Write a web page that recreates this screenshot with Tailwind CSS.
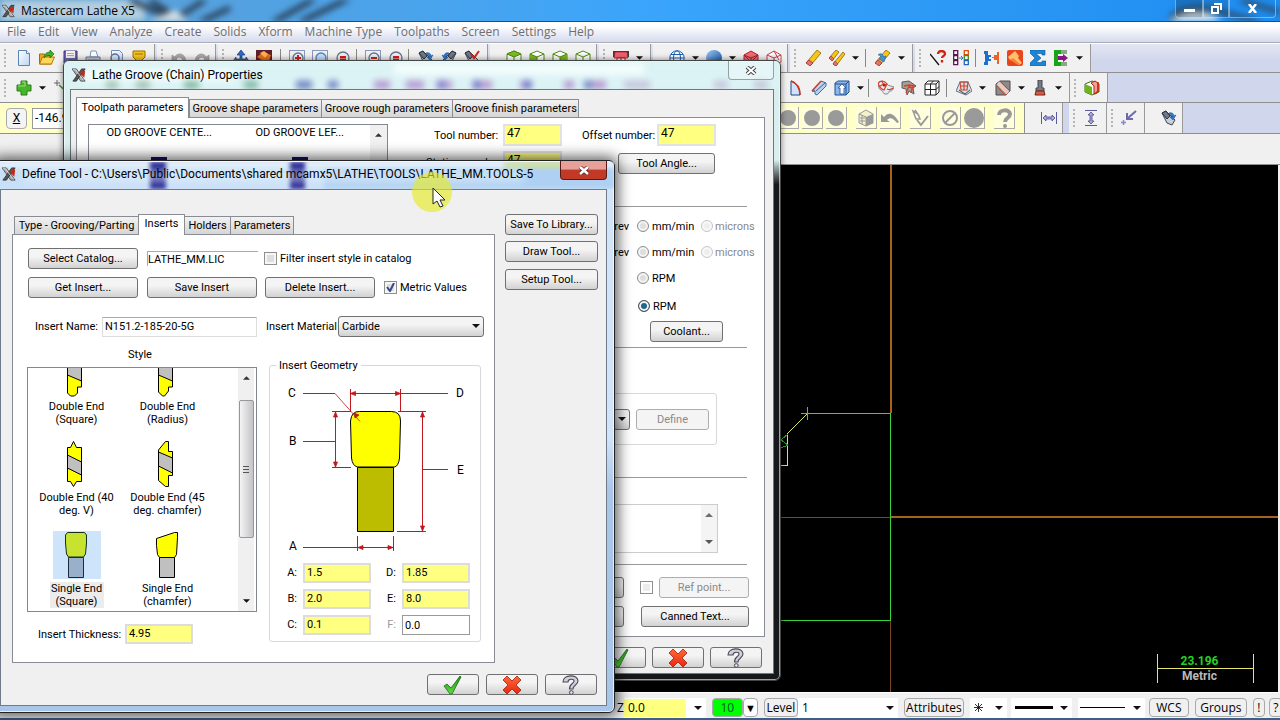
<!DOCTYPE html>
<html lang="en">
<head>
<meta charset="utf-8">
<meta name="viewport" content="width=device-width, initial-scale=1">
<title>Mastercam Lathe X5</title>
<script src="https://cdn.jsdelivr.net/npm/@tailwindcss/browser@4"></script>
</head>
<body class="h-screen overflow-hidden bg-[#f0f0f0] text-[11px] leading-[13px] text-black font-[Roboto,'Liberation_Sans',sans-serif]">

<svg class="absolute size-0" aria-hidden="true">
  <linearGradient id="gBlue" x1="0" y1="0" x2="1" y2="1"><stop offset="0" stop-color="#9cc8f5"/><stop offset="1" stop-color="#0b4a9c"/></linearGradient>
  <linearGradient id="gPage" x1="0" y1="0" x2="1" y2="1"><stop offset="0" stop-color="#fff"/><stop offset="1" stop-color="#b9d5f5"/></linearGradient>
  <linearGradient id="gRed" x1="0" y1="0" x2="0" y2="1"><stop offset="0" stop-color="#ff6a3c"/><stop offset="1" stop-color="#e8260c"/></linearGradient>
  <linearGradient id="gGreen" x1="0" y1="0" x2="0" y2="1"><stop offset="0" stop-color="#1f8a1f"/><stop offset="1" stop-color="#5ee03c"/></linearGradient>
  <symbol id="app" viewBox="0 0 16 16"><path d="M0 1h5l10 14h-5z" fill="#aaa" stroke="#333" stroke-width=".8"/><path d="M15 1h-4L1 15h4z" fill="#555" stroke="#222" stroke-width=".8"/><path d="M10 3h5l-1 8-4-4z" fill="#c22b1c"/><path d="M1 2h3l9 12" stroke="#ddd" fill="none"/></symbol>
  <symbol id="new" viewBox="0 0 16 16"><path d="M2.500 .5h8l3 3v12h-11z" fill="url(#gPage)" stroke="#5b83b5"/><path d="M10.500.5v3h3" fill="#fff" stroke="#5b83b5"/></symbol>
  <symbol id="open" viewBox="0 0 16 16"><path d="M.5 14V4h5l1 1.500h6V14z" fill="#e9a820" stroke="#a56a0a"/><path d="M.5 14l3-7h12l-3 7z" fill="#ffd65a" stroke="#b5780e"/><path d="M5 8c0-4 3-6 6-6V0l4 4-4 4V5.500C8 5.500 6.500 6 5 8z" fill="#3fb32b" stroke="#1d6b14" stroke-width=".7"/></symbol>
  <symbol id="save" viewBox="0 0 16 16"><path d="M2 1h13v14H4l-2-2z" fill="#6c66b8" stroke="#39337f"/><path d="M4 1h9v7H4z" fill="#f4f2ea"/><path d="M5 3.500h7M5 5.500h7" stroke="#b5a98a"/><path d="M5 10h7v5H5z" fill="#d5d5e6"/></symbol>
  <symbol id="print" viewBox="0 0 16 16"><path d="M5 7l1-6h5l2 6z" fill="#fff" stroke="#7796c2"/><path d="M1 7h14v6H1z" fill="#c3cbdc" stroke="#6a7894"/><path d="M3 10h10v5H3z" fill="#e9eef8" stroke="#8190ad"/></symbol>
  <symbol id="prev" viewBox="0 0 16 16"><path d="M3.500.5h8l3 3v12h-11z" fill="url(#gPage)" stroke="#6b8cba"/><circle cx="7" cy="8" r="4" fill="#cfe6fb" stroke="#5d6f8f" stroke-width="1.500"/><path d="M4 11l-3 4" stroke="#5d6f8f" stroke-width="2"/></symbol>
  <symbol id="shield" viewBox="0 0 16 16"><path d="M2 1h12v6l-4 4v4H6v-4L2 7z" fill="#f7c51a" stroke="#9a6a00"/><path d="M4 4h8" stroke="#a06c00"/></symbol>
  <symbol id="undo" viewBox="0 0 16 16"><path d="M1 5v6h6l-2-2c3-3 6-2 7 2v4h3C16 4 8 1 3.500 7z" fill="#a8a8a8" stroke="#8b8b8b" stroke-width=".6"/></symbol>
  <symbol id="tree" viewBox="0 0 16 16"><path d="M8 0l4 5h-3v4h4V7l3 4-3 4H3L0 11l3-4v2h4V5H4z" fill="#2f6bc4" stroke="#123a80" stroke-width=".7"/></symbol>
  <symbol id="paint" viewBox="0 0 16 16"><rect width="16" height="16" fill="#5b1f2d"/><path d="M1 7l6-5 8 3-3 9z" fill="#e9701c"/><path d="M4 3l4-2 4 3-3 4z" fill="#ffb04a"/></symbol>
  <symbol id="zin" viewBox="0 0 16 16"><rect x=".5" y=".5" width="15" height="13" fill="none" stroke="#223a8c" stroke-dasharray="1 1"/><circle cx="9" cy="8" r="5" fill="#e4f0fb" stroke="#6a7386" stroke-width="1.300"/><path d="M6 8h6M9 5v6" stroke="#e01b12" stroke-width="2"/><path d="M5 12l-4 4" stroke="#a98532" stroke-width="2"/></symbol>
  <symbol id="zwin" viewBox="0 0 16 16"><rect x=".5" y=".5" width="15" height="13" fill="none" stroke="#223a8c" stroke-dasharray="1 1"/><circle cx="9" cy="8" r="5" fill="#bfe0fb" stroke="#5b80b5" stroke-width="1.300"/><path d="M5 12l-4 4" stroke="#a98532" stroke-width="2"/></symbol>
  <symbol id="zwo" viewBox="0 0 16 16"><rect x=".5" y=".5" width="15" height="13" fill="none" stroke="#223a8c" stroke-dasharray="1 1"/><circle cx="9" cy="8" r="5" fill="#e4f0fb" stroke="#6a7386" stroke-width="1.300"/><path d="M6 8h6" stroke="#e01b12" stroke-width="2"/><path d="M5 12l-4 4" stroke="#a98532" stroke-width="2"/></symbol>
  <symbol id="zout" viewBox="0 0 16 16"><circle cx="8" cy="8" r="6" fill="#e4f0fb" stroke="#6a7386" stroke-width="1.300"/><path d="M5 7h6M5 9.500h6" stroke="#e01b12" stroke-width="1.800"/><path d="M4 12l-4 4" stroke="#a98532" stroke-width="2"/></symbol>
  <symbol id="spy" viewBox="0 0 16 16"><path d="M1 3l4-2 9 9-3 5-5-2z" fill="#c8ced8" stroke="#3d4654"/><path d="M1 3l5 6 3-3-4-5z" fill="#6d7888" stroke="#2b3340"/><path d="M8 3c3-1 5 1 5 3l2-1-3 5-3-3h2c0-2-2-3-3-4z" fill="#2879d4" stroke="#124682" stroke-width=".5"/></symbol>
  <symbol id="spyr" viewBox="0 0 16 16"><path d="M1 3l4-2 9 9-3 5-5-2z" fill="#c8ced8" stroke="#3d4654"/><path d="M1 3l5 6 3-3-4-5z" fill="#6d7888" stroke="#2b3340"/><path d="M7 4l3 4 5-7" fill="none" stroke="#d2261a" stroke-width="2"/></symbol>
  <symbol id="cubet" viewBox="0 0 16 16"><path d="M1 4l7-3 7 3v8l-7 3-7-3z" fill="#fff" stroke="#4d8a10"/><path d="M1 4l7-3 7 3-7 3z" fill="#7bbb20" stroke="#4d8a10"/><path d="M8 7v8" stroke="#4d8a10"/></symbol>
  <symbol id="cubef" viewBox="0 0 16 16"><path d="M1 4l7-3 7 3v8l-7 3-7-3z" fill="#fff" stroke="#4d8a10"/><path d="M1 4l7 3v8l-7-3z" fill="#7bbb20"/><path d="M1 4l7 3 7-3M8 7v8" fill="none" stroke="#4d8a10"/></symbol>
  <symbol id="cubes" viewBox="0 0 16 16"><path d="M1 4l7-3 7 3v8l-7 3-7-3z" fill="#fff" stroke="#4d8a10"/><path d="M15 4l-7 3v8l7-3z" fill="#7bbb20"/><path d="M1 4l7 3 7-3M8 7v8" fill="none" stroke="#4d8a10"/></symbol>
  <symbol id="cubew" viewBox="0 0 16 16"><path d="M1 4l7-3 7 3v8l-7 3-7-3zM1 4l7 3 7-3M8 7v8" fill="#fff" stroke="#4d8a10"/></symbol>
  <symbol id="cuber" viewBox="0 0 16 16"><path d="M1 5l7-4 7 4v7l-7 3-7-3z" fill="#ef6b74" stroke="#b0202c"/><path d="M1 5l7 3 7-3M8 8v7M1 5l7 7 7-7" fill="none" stroke="#b0202c"/></symbol>
  <symbol id="cuberw" viewBox="0 0 16 16"><path d="M1 5l7-4 7 4v7l-7 3-7-3zM1 5l7 3 7-3M8 8v7M8 1l5 9" fill="#fff" stroke="#c6404a"/></symbol>
  <symbol id="plane" viewBox="0 0 16 16"><path d="M0 1h16v6H0z" fill="#3a3a3a"/><path d="M2 2h12l1 6H1z" fill="#f0606c" stroke="#a01c28" stroke-width=".7"/><path d="M4 8h8v7H4z" fill="#fff" stroke="#a01c28"/><path d="M8 8v7" stroke="#a01c28"/></symbol>
  <symbol id="globe" viewBox="0 0 16 16"><circle cx="8" cy="8" r="7.200" fill="#fff" stroke="#1e5fae"/><ellipse cx="8" cy="8" rx="3.500" ry="7.200" fill="none" stroke="#1e5fae"/><path d="M1 8h14M2 4.500h12M2 11.500h12" stroke="#1e5fae"/></symbol>
  <symbol id="ball" viewBox="0 0 16 16"><circle cx="8" cy="8" r="8" fill="url(#gBlue)"/></symbol>
  <symbol id="pencil" viewBox="0 0 16 16"><path d="M0 13L11 0l4 3L5 15z" fill="#f5c518" stroke="#8b6508" stroke-width=".8"/><path d="M0 13l3-3 4 3-3 3z" fill="#e9726e" stroke="#8a2d28" stroke-width=".7"/></symbol>
  <symbol id="pencil2" viewBox="0 0 16 16"><path d="M0 8L7 0l3 2-7 9zM4 14l10-12 2 2L7 16z" fill="#f5c518" stroke="#8b6508" stroke-width=".8"/><path d="M0 8l2-2 3 3-2 2zM4 14l2-3 3 3-2 2z" fill="#e9726e" stroke="#8a2d28" stroke-width=".6"/></symbol>
  <symbol id="pencil3" viewBox="0 0 16 16"><path d="M0 13L11 0l4 3L5 15z" fill="#f5c518" stroke="#8b6508" stroke-width=".8"/><path d="M0 13l3-3 4 3-3 3z" fill="#e9726e" stroke="#8a2d28" stroke-width=".7"/><path d="M3 5c3-3 6 0 5 2l3-1-2 6-5-3 2-1c0-2-1-3-3-3z" fill="#3c93e0" stroke="#14569a" stroke-width=".5"/></symbol>
  <symbol id="lineq" viewBox="0 0 16 16"><path d="M0 4l9 11" stroke="#111" stroke-width="1.300"/><path d="M8 4c0-4 7-4 7 0 0 2-3 2-3 4M12 10v2.500" fill="none" stroke="#d3210f" stroke-width="2.300"/></symbol>
  <symbol id="boxes" viewBox="0 0 16 16"><path d="M.7.7h4v4h-4zM.7 5.700h4v4h-4zM.7 10.700h4v4h-4z" fill="#fff" stroke="#5d1452" stroke-width="1.300"/><path d="M6 8h4M8 6l2 2-2 2" fill="none" stroke="#2879d4"/><path d="M11.300.7h4v4h-4z" fill="#fff" stroke="#d94f0d" stroke-width="1.300"/><path d="M11.300 5.700h4v4h-4z" fill="#fff" stroke="#3a8c1e" stroke-width="1.300"/><path d="M11.300 10.700h4v4h-4z" fill="#fff" stroke="#2364bd" stroke-width="1.300"/></symbol>
  <symbol id="joint" viewBox="0 0 16 16"><path d="M0 1h4v4h3v6H4v4H0v-3h1V4H0z" fill="#1e6fd0"/><path d="M15 2v12h-2v-4h-3V8H8V7h2V5h3V2z" fill="#f0602a"/><path d="M5 7h2v2H5z" fill="#f1f1f1"/></symbol>
  <symbol id="orange" viewBox="0 0 16 16"><rect width="16" height="16" rx="2" fill="#e8451a"/><path d="M1 7l7-6 4 5-1 2 4 5-3 2-6-6-3 1z" fill="#ffc072"/><path d="M3 10l3-2 7 6-2 1z" fill="#f88230"/></symbol>
  <symbol id="sigma" viewBox="0 0 16 16"><path d="M0 0h15v5h-3V3.500H6L11 8l-5 4.500h6V11h4v5H0v-3l5-5-5-5z" fill="#1b86d8" stroke="#0d5597" stroke-width=".6"/></symbol>
  <symbol id="post" viewBox="0 0 16 16"><path d="M8 2H3v12h5" fill="none" stroke="#19a319" stroke-width="4"/><path d="M9 0v4M11 0v4M13 0v4M9 12v4M11 12v4M13 12v4" stroke="#1f5f1f"/><path d="M5 6h5V4l5 4-5 4v-2H5z" fill="#8a1380"/></symbol>
  <symbol id="plus" viewBox="0 0 16 16"><path d="M5 1h6v4h4v6h-4v4H5v-4H1V5h4z" fill="#46b52b" stroke="#2a7d18"/><path d="M6 2h3v4H2" stroke="#9be27e" fill="none"/></symbol>
  <symbol id="wand" viewBox="0 0 16 16"><path d="M4 0v6M1 3h6" stroke="#666"/><path d="M6 5l10 9" stroke="#3b8f2f" stroke-width="1.500"/></symbol>
  <symbol id="arc" viewBox="0 0 16 16"><path d="M3 1v14h9C12 8 9 3 3 1z" fill="#cfe3fa" stroke="#1c468e"/><path d="M3 1c6 2 9 7 9 14" fill="none" stroke="#d3321c" stroke-width="1.500"/></symbol>
  <symbol id="sheet" viewBox="0 0 16 16"><path d="M1 11L10 1l5 2v3L6 15l-2-1v-3z" fill="#b9d0ee" stroke="#3b68a8"/><path d="M1 11L10 1" stroke="#ce4030" stroke-width="1.500"/><path d="M5 11l9-8M1 11h3" stroke="#4d5f80"/></symbol>
  <symbol id="cubeup" viewBox="0 0 16 16"><path d="M1 3l3-2h11v11l-3 3H1z" fill="#8bb8ec" stroke="#234f93"/><path d="M1 4h11v11M12 4l3-3" fill="none" stroke="#234f93"/><path d="M8 4l4 4h-2v6H6V8H4z" fill="#fff" stroke="#234f93" stroke-width=".8"/></symbol>
  <symbol id="surf" viewBox="0 0 16 16"><path d="M0 3c3-3 7-2 9 1 1 2 5 2 7 3-1 3-2 4-4 4s0 3-4 3-2-3-5-4-2-4-3-7z" fill="#e8eaf0" stroke="#7d8494"/><path d="M0 3c3-3 7-2 9 1l-3 6C3 9 1 7 0 3zM4 2c2 3 3 4 4 5M2 6c3-2 5-2 7-1M9 9c2 1 4 1 6-1" fill="none" stroke="#d2442c" stroke-width="1.200"/><circle cx="6" cy="5" r="1.500" fill="#c01c10"/></symbol>
  <symbol id="surf2" viewBox="0 0 16 16"><path d="M1 2l7-1 7 5-3 2 1 6-5-3-2 4-1-6-4-1z" fill="#a5a09e" stroke="#5a5a5e"/><path d="M3 6l5-1 7 1M5 13l3-7 4 3M12 5l-2 8" fill="none" stroke="#d2442c" stroke-width="1.400"/></symbol>
  <symbol id="grid" viewBox="0 0 16 16"><path d="M1 4l3-3h11v11l-3 3H1zM1 4h11v11M12 4l3-3M6.500 4v11M1 9.500h11l3-3M6.500 4l3-3" fill="#fff" stroke="#222"/></symbol>
  <symbol id="surf3" viewBox="0 0 16 16"><path d="M0 11l4-9 8 0 4 9-6 4z" fill="#d8dfe8" stroke="#69707e"/><path d="M4 2h8l-1 8H5zM5 6h7M8 2v8" stroke="#c8462e" fill="none" stroke-width="1.200"/><path d="M3 10l6 4 5-4" fill="none" stroke="#444"/></symbol>
  <symbol id="block" viewBox="0 0 16 16"><path d="M1 4l4-3h10v10l-4 4H1z" fill="#8e8a88" stroke="#4b4b50"/><path d="M3 3l10 10" stroke="#f3c8bc" stroke-width="4"/><path d="M5 1l10 10M1 5l9 10" stroke="#c4452c"/></symbol>
  <symbol id="tool" viewBox="0 0 16 16"><path d="M6 0h4v8h2v3H4V8h2z" fill="#777b84" stroke="#43464e"/><path d="M3 15l1-4h8l1 4z" fill="#da5a44" stroke="#6e271c"/></symbol>
  <symbol id="verify" viewBox="0 0 16 16"><path d="M1 4l7-3 7 3v8l-7 3-7-3z" fill="#fff" stroke="#38700b"/><path d="M1 4l7 3v8l-7-3z" fill="#6fb41d"/><path d="M7 3l3 3v8l4-2V3l-3-2z" fill="#f1a08c" stroke="#a52316"/><path d="M14 2v9l-3 3" stroke="#d3241a" stroke-width="1.500" fill="none"/></symbol>
  <symbol id="dot" viewBox="0 0 20 20"><circle cx="10" cy="10" r="8" fill="#9a9a9a"/></symbol>
  <symbol id="gcube" viewBox="0 0 20 20"><path d="M3 6l7-4 7 4v9l-7 3-7-3z" fill="#f4f0c8" stroke="#999"/><path d="M10 9l7-3v9l-7 3z" fill="#999"/><path d="M3 6l7 3v9M4 10h5M4 13h5M6 7v9" fill="none" stroke="#999"/></symbol>
  <symbol id="gundo" viewBox="0 0 20 20"><path d="M1 14V6l3 3c4-5 9-5 15 5l-2 1c-4-5-7-6-10-3l3 2z" fill="#999"/></symbol>
  <symbol id="gcheck" viewBox="0 0 20 20"><path d="M5 2l4 6M3 3l3 8h4L8 6z" fill="none" stroke="#999" stroke-width="1.500"/><path d="M7 12l4 5 7-9" fill="none" stroke="#999" stroke-width="2"/></symbol>
  <symbol id="gno" viewBox="0 0 20 20"><circle cx="10" cy="10" r="7" fill="none" stroke="#999" stroke-width="2"/><path d="M5 15L15 5" stroke="#999" stroke-width="2"/></symbol>
  <symbol id="gq" viewBox="0 0 20 20"><path d="M5 7c0-6 11-6 11-1 0 4-5 4-5 8" fill="none" stroke="#999" stroke-width="4"/><circle cx="11" cy="18" r="2" fill="#999"/></symbol>
  <symbol id="hdim" viewBox="0 0 16 16"><path d="M.5 2v12M15.500 2v12" stroke="#5a5a9c"/><path d="M2 8l3-3v2h6V5l3 3-3 3V9H5v2z" fill="#aaa9dc" stroke="#4a4a90" stroke-width=".8"/></symbol>
  <symbol id="vdim" viewBox="0 0 16 16"><path d="M2 .5h12M2 15.500h12" stroke="#5a5a9c"/><path d="M8 2l3 3H9v6h2l-3 3-3-3h2V5H5z" fill="#aaa9dc" stroke="#4a4a90" stroke-width=".8"/></symbol>
  <symbol id="adim" viewBox="0 0 16 16"><path d="M5 12.500H0M2.500 10v5" stroke="#8a89c4" stroke-width="1.500"/><path d="M15 1l-8 7M6 3v6h6" stroke="#6c6bb2" stroke-width="2" fill="none"/></symbol>
  <symbol id="ok" viewBox="0 0 20 20"><path d="M1 11l3-2 4 4L17 1l1 1L9 19H7z" fill="url(#gGreen)" stroke="#1c6e14" stroke-width=".8"/></symbol>
  <symbol id="no" viewBox="0 0 20 20"><path d="M5 1l5 5 5-5 4 4-5 5 5 5-4 4-5-5-5 5-4-4 5-5-5-5z" fill="url(#gRed)" stroke="#a31b08" stroke-width=".8" stroke-linejoin="round"/></symbol>
  <symbol id="q" viewBox="0 0 20 20"><path d="M2 7c0-8 15-8 15-1 0 4-5 4-5 8H8.500c0-6 4.500-5 4.500-8 0-2.500-6-2.500-6 1z" fill="#cfcfe0" stroke="#4a4a54" stroke-width="1.100"/><circle cx="10.300" cy="17.500" r="1.900" fill="#dcdce6" stroke="#4a4a54"/></symbol>
  <symbol id="dn" viewBox="0 0 8 4"><path d="M0 0h8L4 4z" fill="#111"/></symbol>
  <symbol id="up" viewBox="0 0 8 4"><path d="M0 4h8L4 0z" fill="#333"/></symbol>
</svg>

<div class="relative flex h-full w-full flex-col">

  <!-- Application title bar -->
  <header class="relative flex h-[22px] shrink-0 items-center overflow-hidden border-b border-[#1b4f8a] bg-linear-to-r from-[#5f9fd0] via-[#3aa5fb] to-[#1c8cf0] pl-0.5">
    <svg class="absolute inset-0 h-full w-full blur-[3px]" aria-hidden="true">
      <rect x="-5" width="150" height="24" fill="#b3cee0"/>
      <path d="M130 0l45 20 20 4M150 0l30 20M205 0l-25 16M270 24l46-26M300 22l50-24M230 8l-30 14" stroke="#27364a" stroke-width="5" fill="none"/>
      <path d="M140 24l35-14 18 14z" fill="#d9e2e6"/>
      <path d="M1165 24c20-18 45-16 60 0z" fill="#e6edf0"/>
      <path d="M1170 18c10-10 30-14 60-4l30 8M1240 0l40 12" stroke="#33404e" stroke-width="4" fill="none"/>
    </svg>
    <svg class="relative h-4 w-[13px]"><use href="#app"/></svg>
    <h1 class="relative pl-1.5 font-['Open_Sans',sans-serif] text-[12px] leading-4">Mastercam Lathe X5</h1>
    <div class="relative mr-1 ml-auto flex h-full items-start">
      <button aria-label="Minimize" class="flex h-[18px] w-[28px] items-center justify-center rounded-bl border border-t-0 border-white/40 bg-black/20"><span class="mt-1 h-[3px] w-[11px] bg-white"></span></button>
      <button aria-label="Restore" class="flex h-[18px] w-[26px] items-center justify-center border border-t-0 border-white/40 bg-black/10"><svg class="h-[11px] w-[11px]" viewBox="0 0 11 11"><path d="M3 1h7v6M1 4h6v6H1z" fill="none" stroke="#fff" stroke-width="2"/></svg></button>
      <button aria-label="Close" class="flex h-[18px] w-[47px] items-center justify-center rounded-br border border-t-0 border-white/40"><svg class="h-[9px] w-[9px]" viewBox="0 0 9 9"><path d="M1 0l7 9M8 0L1 9" stroke="#fff" stroke-width="2.500"/></svg></button>
    </div>
  </header>

  <nav class="flex h-[21px] shrink-0 items-center gap-3 border-b border-[#a9adbb] bg-linear-to-b from-white from-20% to-[#d5dbec] pl-[7px] font-['Open_Sans',sans-serif] text-[12px] leading-4 text-[#6e6e70] [&>a]:whitespace-nowrap">
    <a href="#">File</a><a href="#">Edit</a><a href="#">View</a><a href="#">Analyze</a><a href="#">Create</a><a href="#">Solids</a><a href="#">Xform</a><a href="#">Machine Type</a><a href="#">Toolpaths</a><a href="#">Screen</a><a href="#">Settings</a><a href="#">Help</a>
  </nav>

  <!-- Toolbars -->
  <div class="flex h-[122px] shrink-0 flex-col bg-linear-to-b from-[#e3e6f2] to-[#d0d6ec] to-15%
    [&_.bar]:flex [&_.bar]:shrink-0 [&_.bar]:items-center [&_.bar]:border-r [&_.bar]:border-[#9a9a9a] [&_.bar]:bg-[#f1f1f1] [&_.bar]:pl-3 [&_.bar]:pr-1
    [&_.i]:flex [&_.i]:h-4 [&_.i]:w-[23px] [&_.i]:shrink-0 [&_.i]:items-center [&_.i]:justify-center [&_.i>svg]:h-4 [&_.i>svg]:w-4
    [&_.d]:flex [&_.d]:h-4 [&_.d]:w-[14px] [&_.d]:shrink-0 [&_.d]:items-center [&_.d]:justify-center [&_.d>svg]:h-1 [&_.d>svg]:w-[7px]
    [&_.s]:mx-px [&_.s]:h-[18px] [&_.s]:w-px [&_.s]:shrink-0 [&_.s]:bg-[#888]
    [&_.grip]:-ml-2 [&_.grip]:mr-1 [&_.grip]:h-[18px] [&_.grip]:w-1 [&_.grip]:border-l-2 [&_.grip]:border-dotted [&_.grip]:border-[#b5b5b5]">
    <div class="flex h-[29px] shrink-0 gap-0.5 border-t border-white">
      <div class="bar w-[155px]"><span class="grip"></span>
        <button class="i" aria-label="New"><svg><use href="#new"/></svg></button><button class="i" aria-label="Open"><svg><use href="#open"/></svg></button><button class="i" aria-label="Save"><svg><use href="#save"/></svg></button><button class="i" aria-label="Print"><svg><use href="#print"/></svg></button><button class="i" aria-label="Preview"><svg><use href="#prev"/></svg></button><button class="i" aria-label="Material"><svg><use href="#shield"/></svg></button>
      </div>
      <div class="bar w-[59px]"><span class="grip"></span><button class="i" aria-label="Undo"><svg><use href="#undo"/></svg></button><button class="i" aria-label="Redo"><svg class="-scale-x-100"><use href="#undo"/></svg></button></div>
      <div class="bar w-[270px]"><span class="grip"></span>
        <button class="i" aria-label="Regenerate"><svg><use href="#tree"/></svg></button><button class="i" aria-label="Repaint"><svg><use href="#paint"/></svg></button><span class="w-1"></span><span class="s"></span><span class="w-1"></span>
        <button class="i" aria-label="Zoom in"><svg><use href="#zin"/></svg></button><button class="i" aria-label="Zoom window"><svg><use href="#zwin"/></svg></button><button class="i" aria-label="Zoom target"><svg><use href="#zout"/></svg></button><span class="s"></span><span class="w-1"></span>
        <button class="i" aria-label="Unzoom"><svg><use href="#zwo"/></svg></button><button class="i" aria-label="Zoom out"><svg><use href="#zout"/></svg></button><span class="s"></span><span class="w-1"></span>
        <button class="i" aria-label="Rotate view"><svg><use href="#spy"/></svg></button><button class="i" aria-label="Previous view"><svg class="-scale-x-100"><use href="#spy"/></svg></button><button class="i" aria-label="Named view"><svg><use href="#spyr"/></svg></button>
      </div>
      <div class="bar w-[107px]"><button class="i" aria-label="Top view"><svg><use href="#cubet"/></svg></button><button class="i" aria-label="Front view"><svg><use href="#cubef"/></svg></button><button class="i" aria-label="Right view"><svg><use href="#cubes"/></svg></button><button class="i" aria-label="Isometric view"><svg><use href="#cubew"/></svg></button></div>
      <div class="bar w-[52px]"><span class="grip"></span><button class="i" aria-label="Planes"><svg><use href="#plane"/></svg></button><span class="d"><svg><use href="#dn"/></svg></span></div>
      <div class="bar w-[135px]"><button class="i" aria-label="Wireframe"><svg><use href="#globe"/></svg></button><span class="d"><svg><use href="#dn"/></svg></span><button class="i" aria-label="Shaded"><svg><use href="#ball"/></svg></button><span class="d"><svg><use href="#dn"/></svg></span><button class="i" aria-label="Hidden"><svg><use href="#cuber"/></svg></button><button class="i" aria-label="Outline"><svg><use href="#cuberw"/></svg></button></div>
      <div class="bar w-[123px]"><span class="grip"></span><button class="i" aria-label="Delete"><svg><use href="#pencil"/></svg></button><button class="i" aria-label="Delete duplicates"><svg><use href="#pencil2"/></svg></button><span class="d"><svg><use href="#dn"/></svg></span><span class="w-0.5"></span><span class="s"></span><span class="w-1"></span><button class="i" aria-label="Undelete"><svg><use href="#pencil3"/></svg></button><span class="d"><svg><use href="#dn"/></svg></span></div>
      <div class="bar w-[176px]"><span class="grip"></span><button class="i" aria-label="Analyze entity"><svg><use href="#lineq"/></svg></button><button class="i" aria-label="Change attributes"><svg><use href="#boxes"/></svg></button><span class="w-0.5"></span><span class="s"></span><span class="w-1"></span><button class="i" aria-label="Combine"><svg><use href="#joint"/></svg></button><button class="i" aria-label="Shade"><svg><use href="#orange"/></svg></button><button class="i" aria-label="Statistics"><svg><use href="#sigma"/></svg></button><button class="i" aria-label="Post"><svg><use href="#post"/></svg></button><span class="d"><svg><use href="#dn"/></svg></span></div>
    </div>
    <div class="flex h-[30px] shrink-0 border-t border-[#8f8f8f]">
      <div class="bar w-[1070px]"><span class="grip"></span><button class="i" aria-label="Point"><svg><use href="#plus"/></svg></button><span class="d"><svg><use href="#dn"/></svg></span><button class="i" aria-label="Line"><svg><use href="#wand"/></svg></button>
        <span class="min-w-0 flex-1"></span>
        <button class="i" aria-label="Revolve"><svg><use href="#arc"/></svg></button><button class="i" aria-label="Sweep"><svg><use href="#sheet"/></svg></button><button class="i" aria-label="Extrude"><svg><use href="#cubeup"/></svg></button><span class="d"><svg><use href="#dn"/></svg></span><span class="s"></span><span class="w-1"></span>
        <button class="i" aria-label="Surface"><svg><use href="#surf"/></svg></button><button class="i" aria-label="Trim surface"><svg><use href="#surf2"/></svg></button><button class="i" aria-label="Net"><svg><use href="#grid"/></svg></button><span class="w-0.5"></span><span class="s"></span><span class="w-1"></span>
        <button class="i" aria-label="Blend"><svg><use href="#surf3"/></svg></button><span class="d"><svg><use href="#dn"/></svg></span><span class="w-0.5"></span><button class="i" aria-label="Block"><svg><use href="#block"/></svg></button><span class="d"><svg><use href="#dn"/></svg></span><button class="i" aria-label="Tool"><svg><use href="#tool"/></svg></button><span class="d"><svg><use href="#dn"/></svg></span></div>
      <div class="bar w-[38px]"><span class="grip"></span><button class="i" aria-label="Verify"><svg><use href="#verify"/></svg></button></div>
    </div>
    <div class="flex h-[32px] shrink-0 border-y border-[#8f8f8f]">
      <div class="flex w-[1025px] shrink-0 items-center border-r border-[#8f8f8f] bg-[#ffffc8] pl-1.5 [&_.g]:h-[22px] [&_.g]:w-[21px] [&_.g]:border-r [&_.g]:border-b [&_.g]:border-[#aaa] [&_.g]:bg-white/40 [&_.g>svg]:h-5 [&_.g>svg]:w-5">
        <button class="h-[21px] w-[21px] rounded-sm border border-[#aaa] bg-[#f4f4f4] text-[12px] underline">X</button>
        <input aria-label="X coordinate" value="-146.97" class="ml-[5px] h-[21px] w-20 border border-[#999] bg-white pl-0.5 text-[12px]">
        <div class="ml-auto flex gap-[3px] pr-[9px]">
          <button class="g" aria-label="Option 1"><svg><use href="#dot"/></svg></button><button class="g" aria-label="Option 2"><svg><use href="#dot"/></svg></button><button class="g" aria-label="Option 3"><svg><use href="#dot"/></svg></button><span class="w-[3px]"></span>
          <button class="g" aria-label="Cube"><svg><use href="#gcube"/></svg></button><button class="g" aria-label="Back"><svg><use href="#gundo"/></svg></button><span class="w-[3px]"></span><button class="g" aria-label="Apply"><svg><use href="#gcheck"/></svg></button><span class="w-[3px]"></span>
          <button class="g" aria-label="None"><svg><use href="#gno"/></svg></button><button class="g" aria-label="All"><svg class="scale-125"><use href="#dot"/></svg></button><span class="w-[3px]"></span><button class="g" aria-label="Help"><svg><use href="#gq"/></svg></button>
        </div>
      </div>
      <div class="bar mr-1.5 w-[38px]"><button class="i" aria-label="Horizontal"><svg><use href="#hdim"/></svg></button></div>
      <div class="bar w-[38px]"><span class="grip"></span><button class="i" aria-label="Vertical"><svg><use href="#vdim"/></svg></button></div>
      <div class="bar w-[38px]"><span class="grip"></span><button class="i" aria-label="Endpoint"><svg><use href="#adim"/></svg></button></div>
      <div class="bar w-[38px]"><button class="i" aria-label="Inspect"><svg><use href="#spy"/></svg></button></div>
    </div>
    <div class="flex-1 border-b border-[#909090] bg-[#f0f0f0]"></div>
  </div>

  <!-- Graphics area -->
  <main class="relative mr-0.5 min-h-0 flex-1 overflow-hidden bg-black">
    <svg class="absolute inset-0 h-full w-full" shape-rendering="crispEdges" aria-label="Part geometry">
      <path d="M0 352.500h890" stroke="#7a4a28"/><path d="M891 352h400" stroke="#a8621c" stroke-width="2"/>
      <path d="M891 0v248" stroke="#a8621c" stroke-width="2"/><path d="M890.500 455v400" stroke="#7a4a28"/>
      <path d="M806.500 249.500L787.500 268.500v32H770" fill="none" stroke="#dbe36a"/>
      <path d="M807 248.500h83.500v207H700" fill="none" stroke="#37d23c"/>
      <path d="M801 248.500h12M807.500 242v13" stroke="#37d23c"/>
      <path d="M788 269l-7 6 7 5-7 3" fill="none" stroke="#2aa02e"/>
    </svg>
    <div class="absolute right-6 bottom-[9px] w-[97px] border-x border-[#e5e56e] text-center text-[12px] font-bold leading-[14px]">
      <div class="border-b border-[#e5e56e] pr-3 text-[#21d321]">23.196</div>
      <div class="pr-3 text-[#b8b8b8]">Metric</div>
    </div>
  </main>

  <!-- Status bar -->
  <footer class="flex h-[28px] shrink-0 items-center overflow-hidden border-t border-b-2 border-t-white border-b-[#3e5f8a] bg-[#f0f0f0] pt-1 pl-[617px] font-['Open_Sans',sans-serif] text-[12px] leading-4 [&_button]:h-[19px] [&_button]:shrink-0 [&_button]:rounded-sm [&_button]:border [&_button]:border-[#a9a9a9] [&_.w]:flex [&_.w]:h-[20px] [&_.w]:shrink-0 [&_.w]:items-center [&_.w]:justify-between [&_.w]:bg-white [&_.w]:pr-1 [&_.w>svg]:h-1 [&_.w>svg]:w-2">
    <label for="z" class="w-[11px]">Z</label>
    <div class="w w-[82px]"><input id="z" value="0.0" class="h-[18px] w-[62px] bg-[#ffff80] pl-1"><svg><use href="#dn"/></svg></div>
    <button aria-label="Color" class="ml-1.5 w-[31px] bg-[#00ff00] text-[#053]">10</button>
    <button aria-label="Pick color" class="w-[15px] bg-white text-[11px]">▼</button>
    <button class="ml-1.5 w-[34px]">Level</button>
    <div class="w w-[100px] pl-1"><input aria-label="Level number" value="1" class="w-12"><svg><use href="#dn"/></svg></div>
    <button class="ml-1.5 w-[60px]">Attributes</button>
    <div class="w ml-1.5 w-[37px]"><span class="pl-1"><svg class="size-[9px]" viewBox="0 0 9 9"><path d="M4.500 0v9M0 4.500h9M1 1l7 7M8 1L1 8" stroke="#000" stroke-width=".8"/></svg></span><svg><use href="#dn"/></svg></div>
    <div class="w ml-1 w-[61px]"><span class="ml-1 h-[3px] w-[38px] bg-black"></span><svg><use href="#dn"/></svg></div>
    <div class="w ml-1.5 w-[67px]"><span class="ml-0.5 h-px w-[45px] bg-black"></span><svg><use href="#dn"/></svg></div>
    <button class="ml-1 w-[40px]">WCS</button>
    <button class="ml-1.5 w-[52px]">Groups</button>
    <button aria-label="Alert" class="ml-1.5 w-[12px]">!</button>
    <button aria-label="Help" class="ml-1 w-[14px]">?</button>
  </footer>

  <!-- Lathe Groove (Chain) Properties -->
  <section aria-label="Lathe Groove (Chain) Properties" class="absolute top-[60px] left-[63px] flex h-[621px] w-[718px] flex-col overflow-hidden rounded-md border border-[#444] bg-linear-to-b from-[#d9efef] from-16% to-[#16191b] to-20% px-1.5 pb-1.5 shadow-[0_0_6px_rgba(0,0,0,0.5)] inset-ring inset-ring-white/60
    [&_.btn]:h-[21px] [&_.btn]:shrink-0 [&_.btn]:rounded-[3px] [&_.btn]:border [&_.btn]:border-[#707070] [&_.btn]:bg-linear-to-b [&_.btn]:from-[#f4f4f4] [&_.btn]:from-40% [&_.btn]:to-[#d2d2d2] [&_.btn:disabled]:border-[#adadad] [&_.btn:disabled]:bg-[#f4f4f4] [&_.btn:disabled]:bg-none [&_.btn:disabled]:text-[#8a8a8a]
    [&_input.rd]:size-3 [&_input.rd]:appearance-none [&_input.rd]:rounded-full [&_input.rd]:border [&_input.rd]:border-[#8e8f8f] [&_input.rd]:bg-[#dedede] [&_input.rd]:inset-ring-2 [&_input.rd]:inset-ring-[#f4f4f4] [&_input.rd:checked]:bg-[#1f6590] [&_input.rd:checked]:border-[#555] [&_input.rd:disabled]:opacity-50
    [&_.yel]:h-[22px] [&_.yel]:w-[59px] [&_.yel]:border-2 [&_.yel]:border-[#e2e2e2] [&_.yel]:bg-[#ffff80] [&_.yel]:pl-0.5 [&_.yel]:pb-1 [&_.yel]:text-[12px]">
    <div class="pointer-events-none absolute inset-x-0 top-0 h-7 overflow-hidden" aria-hidden="true">
      <svg class="h-full w-full blur-[3px]"><rect width="720" height="28" fill="#dcf3f5"/><path d="M330 8h250M20 14h150" stroke="#f2fcfc" stroke-width="12"/>
        <g stroke-width="9"><path d="M42 24h12M72 24h14" stroke="#a5c4b6"/><path d="M120 24h15M180 24h14" stroke="#88baa7"/><path d="M232 24h16M264 24h10M520 24h8" stroke="#7488c4"/><path d="M310 24h16M342 24h18M372 24h16M408 24h20M456 24h12M500 24h10M528 24h14" stroke="#b89bd2"/><path d="M375 24h5M460 24h7M410 24h6" stroke="#6875c8"/><path d="M560 24h26M650 24h14M690 24h14" stroke="#c7c8dc"/></g></svg>
    </div>
    <div class="relative flex h-7 shrink-0 items-center pl-0.5">
      <svg class="h-[14px] w-[14px]"><use href="#app"/></svg>
      <h2 class="pl-1.5 text-[12px] leading-4">Lathe Groove (Chain) Properties</h2>
      <button aria-label="Close" class="mr-0 ml-auto flex h-[19px] w-[46px] items-center justify-center self-start rounded-b border border-t-0 border-[#8fa3a8] bg-white/30"><svg class="h-[9px] w-[12px]" viewBox="0 0 12 9"><path d="M2 1l8 7M10 1L2 8" stroke="#444" stroke-width="4"/><path d="M2 1l8 7M10 1L2 8" stroke="#fff" stroke-width="2"/></svg></button>
    </div>
    <div class="relative flex min-h-0 flex-1 flex-col border border-[#6b7a7c] bg-[#f0f0f0] pt-[7px] pr-2 pl-[5px]">
      <div role="tablist" class="relative z-10 -mb-px flex h-[21px] shrink-0 items-end [&>button]:h-[19px] [&>button]:border [&>button]:border-[#898c95] [&>button]:bg-linear-to-b [&>button]:from-[#f2f2f2] [&>button]:to-[#d6d6d6]">
        <div class="h-[21px] w-[113px] border border-b-0 border-[#898c95] bg-white pt-[3px] text-center" role="tab" aria-selected="true">Toolpath parameters</div>
        <button role="tab" class="w-[133px] border-l-0">Groove shape parameters</button><button role="tab" class="-ml-px w-[132px]">Groove rough parameters</button><button role="tab" class="-ml-px w-[127px]">Groove finish parameters</button>
      </div>
      <div class="flex h-[520px] shrink-0 justify-between border border-[#898c95] bg-white pr-[17px] pl-[11px]">
        <div class="mt-1.5 flex h-[200px] w-[300px] border border-[#828790]">
          <div class="grid flex-1 grid-cols-2 content-start gap-y-[18px] pt-px text-center">
            <span>OD GROOVE CENTE...</span><span>OD GROOVE LEF...</span>
            <span class="mx-auto h-10 w-4 bg-[#12126a]"></span><span class="mx-auto h-10 w-4 bg-[#12126a]"></span>
          </div>
          <div class="w-[17px] bg-[#f0f0f0] pt-2"><svg class="mx-auto h-1 w-[7px]"><use href="#up"/></svg></div>
        </div>
        <div class="flex w-[313px] flex-col">
          <div class="mt-1.5 flex h-[22px] items-center"><label for="tn" class="w-[69px]">Tool number:</label><input id="tn" class="yel" value="47"><label for="on" class="ml-[18px] w-[77px] pl-0.5 whitespace-nowrap">Offset number:</label><input id="on" class="yel" value="47"></div>
          <div class="mt-1 flex h-[24px] items-center"><label for="sn" class="w-[69px] -indent-2 whitespace-nowrap">Station number:</label><input id="sn" class="yel" value="47"><button class="btn ml-[56px] w-[97px] self-end">Tool Angle...</button></div>
          <div class="mt-[32px] border-t border-[#999]"></div>
          <div class="mt-1.5 -mr-[5px] flex flex-col text-[11px] [&>div]:flex [&>div]:h-[26px] [&>div]:items-center [&>div]:justify-end [&_label]:whitespace-nowrap">
            <div><span class="mr-2">mm/rev</span><input type="radio" id="r1" name="f1" class="rd"><label for="r1" class="w-[52px] pl-[3px]">mm/min</label><input type="radio" disabled id="m1" name="f1" class="rd"><label for="m1" class="w-[39px] pl-0.5 text-[#888]">microns</label></div>
            <div><span class="mr-2">mm/rev</span><input type="radio" id="r2" name="f2" class="rd"><label for="r2" class="w-[52px] pl-[3px]">mm/min</label><input type="radio" disabled id="m2" name="f2" class="rd"><label for="m2" class="w-[39px] pl-0.5 text-[#888]">microns</label></div>
            <div><input type="radio" id="r3" name="f3" class="rd"><label for="r3" class="w-[103px] pl-[3px]">RPM</label></div>
            <div class="mt-0.5"><input type="radio" id="r4" name="f4" class="rd" checked><label for="r4" class="w-[102px] pl-[3px]">RPM</label></div>
          </div>
          <button class="btn mt-0.5 mr-6 w-[73px] self-end">Coolant...</button>
          <div class="mt-[5px] border-t border-[#999]"></div>
          <div class="mt-[45px] mr-[30px] flex h-[52px] items-center justify-end rounded-[3px] border border-[#d8d8d8] pr-[7px]"><button aria-label="Choose" class="btn flex w-[17px] items-center justify-center"><svg class="h-1 w-2"><use href="#dn"/></svg></button><button class="btn ml-1.5 w-[73px]" disabled>Define</button></div>
          <div class="mt-[32px] border-t border-[#999]"></div>
          <div class="mt-[26px] mr-[29px] flex h-[49px] border border-[#ccc]"><textarea aria-label="Comment" class="min-w-0 flex-1 resize-none"></textarea><div class="flex w-4 flex-col items-center justify-between bg-[#f0f0f0] py-2 opacity-70"><svg class="h-1 w-2"><use href="#up"/></svg><svg class="h-1 w-2"><use href="#dn"/></svg></div></div>
          <div class="mt-[11px] border-t border-[#999]"></div>
          <div class="mt-3 -mr-0.5 flex items-center justify-end"><button class="btn w-[88px]" aria-label="Axis"></button><input type="checkbox" aria-label="Use reference point" class="ml-4 size-[13px] appearance-none border border-[#8e8f8f] bg-[#ececec] inset-ring-2 inset-ring-white"><button class="btn ml-1.5 w-[90px]" disabled>Ref point...</button></div>
          <div class="mt-2 -mr-0.5 flex justify-end gap-[17px]"><button class="btn w-[88px]" aria-label="Misc"></button><button class="btn w-[108px]">Canned Text...</button></div>
        </div>
      </div>
      <div class="mt-2.5 flex justify-end gap-1.5 pr-[3px] [&>button]:flex [&>button]:h-[27px] [&>button]:w-[52px] [&>button]:items-center [&>button]:justify-center [&_svg]:size-5">
        <button class="btn" aria-label="OK"><svg><use href="#ok"/></svg></button><button class="btn" aria-label="Cancel"><svg><use href="#no"/></svg></button><button class="btn" aria-label="Help"><svg><use href="#q"/></svg></button>
      </div>
    </div>
  </section>

  <!-- Define Tool -->
  <section aria-label="Define Tool" class="absolute top-[160px] -left-[7px] flex h-[553px] w-[622px] flex-col rounded-md border border-[#222] bg-linear-to-b from-[#d2e4f8] from-50% to-[#a9c6e8] to-60% pr-[7px] pb-1.5 pl-1.5 shadow-[0_0_14px_3px_rgba(0,0,0,0.65)] inset-ring inset-ring-white/70
    [&_.btn]:h-[21px] [&_.btn]:shrink-0 [&_.btn]:rounded-[3px] [&_.btn]:border [&_.btn]:border-[#707070] [&_.btn]:bg-linear-to-b [&_.btn]:from-[#f4f4f4] [&_.btn]:from-40% [&_.btn]:to-[#d2d2d2]
    [&_.ck]:size-[13px] [&_.ck]:shrink-0 [&_.ck]:appearance-none [&_.ck]:border [&_.ck]:border-[#8e8f8f] [&_.ck]:bg-[#dedede] [&_.ck]:inset-ring-2 [&_.ck]:inset-ring-[#f6f6f6]
    [&_.yel]:h-[20px] [&_.yel]:w-[68px] [&_.yel]:border-2 [&_.yel]:border-[#dcdcdc] [&_.yel]:bg-[#ffff80] [&_.yel]:pl-0.5 [&_.yel]:pb-0.5 [&_.yel]:text-[11px]">
    <div class="pointer-events-none absolute inset-x-0 top-px h-[27px] overflow-hidden" aria-hidden="true">
      <svg class="h-full w-full blur-[2px]"><rect x="-9" width="640" height="34" fill="#c8dff8"/><rect x="330" width="300" height="34" fill="#aed0f2"/><path d="M0 0h620v6H0z" fill="#e4effa"/><path d="M156 -4h16v40h-16zM296 -4h15v40h-15z" fill="#1c1c8c"/><path d="M510 0h60v6h-60z" fill="#cfdf9c"/></svg>
      <svg class="absolute inset-0 h-full w-full blur-[5px]"><path d="M30 14h500" stroke="#e6f1fc" stroke-width="12" stroke-opacity=".6"/></svg>
    </div>
    <div class="relative flex h-7 shrink-0 items-center pb-0.5 pl-0.5">
      <svg class="h-[14px] w-[14px]"><use href="#app"/></svg>
      <h2 class="pl-1.5 text-[12px] leading-4 whitespace-nowrap">Define Tool - C:\Users\Public\Documents\shared mcamx5\LATHE\TOOLS\LATHE_MM.TOOLS-5</h2>
      <button aria-label="Close" class="ml-auto flex h-[19px] w-[47px] items-center justify-center self-start rounded-b border border-t-0 border-[#5a1a14] bg-linear-to-b from-[#e6a29a] from-45% to-[#c23a26] to-50%"><svg class="h-[9px] w-[12px]" viewBox="0 0 12 9"><path d="M2 1l8 7M10 1L2 8" stroke="#5a2a26" stroke-width="4"/><path d="M2 1l8 7M10 1L2 8" stroke="#fff" stroke-width="2.500"/></svg></button>
    </div>
    <div class="relative flex min-h-0 flex-1 flex-col border border-[#6f7b8a] bg-[#f0f0f0] pt-6 pr-[9px] pl-[11px]">
      <div class="flex gap-[10px]">
        <div class="w-[483px] shrink-0">
          <div role="tablist" class="relative z-10 -mb-px flex h-[21px] items-end pl-0.5 [&>button]:h-[19px] [&>button]:border [&>button]:border-[#898c95] [&>button]:bg-linear-to-b [&>button]:from-[#f2f2f2] [&>button]:to-[#d6d6d6]">
            <button role="tab" class="w-[125px] whitespace-nowrap">Type - Grooving/Parting</button><div class="-ml-px h-[21px] w-[47px] border border-b-0 border-[#898c95] bg-white pt-0.5 text-center" role="tab" aria-selected="true">Inserts</div><button role="tab" class="-ml-px w-[47px]">Holders</button><button role="tab" class="-ml-px w-[64px]">Parameters</button>
          </div>
          <div class="flex h-[429px] flex-col border border-[#898c95] bg-white pt-[13px] pr-2.5 pl-3.5">
            <div class="flex items-center pl-px"><button class="btn w-[110px]">Select Catalog...</button><input aria-label="Catalog" value="LATHE_MM.LIC" class="ml-[9px] h-[15px] w-[111px] border-t border-l border-[#aaa] text-[11px]"><input type="checkbox" id="fi" class="ck ml-1.5"><label for="fi" class="pl-[3px]">Filter insert style in catalog</label></div>
            <div class="mt-2 flex items-center pl-px"><button class="btn w-[110px]">Get Insert...</button><button class="btn ml-[9px] w-[110px]">Save Insert</button><button class="btn ml-2 w-[110px]">Delete Insert...</button><span class="relative ml-[9px] flex"><input type="checkbox" id="mv" checked class="ck"><svg class="pointer-events-none absolute inset-0.5 size-[9px]" viewBox="0 0 9 9"><path d="M1 4l3 4 4-8" fill="none" stroke="#39498c" stroke-width="2"/></svg></span><label for="mv" class="pl-[3px]">Metric Values</label></div>
            <div class="mt-[18px] flex items-center pl-2"><label for="nm" class="w-[67px]">Insert Name:</label><input id="nm" value="N151.2-185-20-5G" class="h-[20px] w-[155px] border border-[#ddd] border-t-[#aaa] pl-0.5 text-[11px]"><label for="mt" class="w-[81px] pl-[9px] whitespace-nowrap">Insert Material</label>
              <span class="relative"><select id="mt" class="btn w-[146px] appearance-none pl-[3px] text-[11px]"><option>Carbide</option></select><svg class="pointer-events-none absolute top-2 right-1 h-1 w-2"><use href="#dn"/></svg></span></div>
            <div class="mt-[11px] flex gap-3">
              <div class="w-[230px] shrink-0">
                <div class="pr-1 text-center">Style</div>
                <div class="mt-[6px] flex h-[245px] border border-[#828790]">
                  <div class="grid flex-1 grid-cols-[91px_91px] content-end gap-y-[14px] overflow-hidden pb-[3px] pl-[3px] text-center leading-[13px] [&_svg]:mx-auto [&_svg]:mb-[3px] [&_svg]:size-12">
                    <div><svg viewBox="0 0 48 48"><path d="M14 2h14v30h-14z" fill="#c0c0c0"/><path d="M14.500 26l14 6v6h-4v6l-3 3h-4l-3-3z" fill="#ff0" stroke="#000"/><path d="M14.500 0v26M28.500 0v32" stroke="#000"/></svg>Double End (Square)</div>
                    <div><svg viewBox="0 0 48 48"><path d="M14 2h14v30h-14z" fill="#c0c0c0"/><path d="M14.500 26l14 6v6h-4v4l-4 5h-2l-4-4z" fill="#ff0" stroke="#000"/><path d="M14.500 0v26M28.500 0v32" stroke="#000"/></svg>Double End (Radius)</div>
                    <div><svg viewBox="0 0 48 48"><path d="M14.500 7.500h3l3-6 3 6h5v34h-5l-3 5-3-5h-3z" fill="#ff0" stroke="#000"/><path d="M14.500 15l14 7v13l-14-7z" fill="#c0c0c0" stroke="#000"/></svg>Double End (40 deg. V)</div>
                    <div><svg viewBox="0 0 48 48"><path d="M14.500 10l7-8.500h3v10h4v24h-4v11h-3l-7-6z" fill="#ff0" stroke="#000"/><path d="M14.500 12l14 6v15l-14-7z" fill="#c0c0c0" stroke="#000"/></svg>Double End (45 deg. chamfer)</div>
                    <div><svg class="bg-[#cde4fa]" viewBox="0 0 48 48"><path d="M12.500 4l2-2.500h17l2 2.500v8l-1 11-2 3h-15l-2-3-1-11z" fill="#c7e32f" stroke="#12301c"/><path d="M15.500 26.500h15v20h-15z" fill="#9ab0ca" stroke="#1b2a3c"/></svg><span class="mx-auto block w-[54px] bg-[#ececec]">Single End (Square)</span></div>
                    <div><svg viewBox="0 0 48 48"><path d="M12.500 7.500l18-6h3v5l-1 17-2 3h-15l-2-3-1-9z" fill="#ff0" stroke="#000"/><path d="M15.500 26.500h15v20h-15z" fill="#c0c0c0" stroke="#000"/></svg><span class="mx-auto block w-[54px]">Single End (chamfer)</span></div>
                  </div>
                  <div class="mr-0.5 flex w-[16px] shrink-0 flex-col items-center bg-[#f0f0f0] py-2"><svg class="h-1 w-[7px]"><use href="#up"/></svg><div class="mt-5 flex h-[138px] w-[15px] flex-col items-center justify-center gap-0.5 rounded-[2px] border border-[#979797] bg-linear-to-r from-[#f4f4f4] to-[#c4c4c8]"><i class="h-px w-1.5 bg-[#555]"></i><i class="h-px w-1.5 bg-[#555]"></i><i class="h-px w-1.5 bg-[#555]"></i></div><svg class="mt-auto h-1 w-[7px]"><use href="#dn"/></svg></div>
                </div>
                <div class="mt-3 flex items-center pl-[11px]"><label for="th" class="w-[87px]">Insert Thickness:</label><input id="th" class="yel" value="4.95"></div>
              </div>
              <fieldset class="mt-[11px] h-[283px] w-[212px] rounded-[3px] border border-[#d8d8d8] px-0"><legend class="ml-1.5 px-[3px] leading-[13px]">Insert Geometry</legend>
                <svg class="mt-1 h-[182px] w-full" viewBox="270 376 210 182" font-size="12">
                  <g fill="none" stroke="#c0181c" shape-rendering="crispEdges"><path d="M303 393.500h32M351 393.500h97M350.500 389v23M400.500 389v23M332 411.500h19M332 467.500h19M335.500 412v55M303 441.500h32M398 411.500h28M397 531.500h29M422.500 412v119M422 469.500h26M303 547.500h90M357.500 536v15M393.500 536v15"/></g>
                  <path d="M350.500 421q1-10 9-9.500h32q9 0 9 9.500l-1 37q-1 8-5 9h-37q-5-1-6-9z" fill="#ff0" stroke="#000"/>
                  <path d="M357.500 467.500h36v64h-36z" fill="#bcbc00" stroke="#000"/>
                  <path d="M335 393.500l25 28M350.500 393.500l5-2v4zM400.500 393.500l-5-2v4zM335.500 412l-2 5h4zM335.500 467l-2-5h4zM422.500 412l-2 5h4zM422.500 531l-2-5h4zM358 547.500l5-2v4zM393 547.500l-5-2v4zM354 413l1 5 4-3z" fill="#c0181c" stroke="#c0181c" stroke-width=".8"/>
                  <text x="288" y="397">C</text><text x="456" y="397">D</text><text x="289" y="445">B</text><text x="457" y="474">E</text><text x="289" y="550">A</text>
                </svg>
                <div class="mt-[5px] grid grid-cols-[28px_68px_31px_68px] items-center gap-y-1.5 pl-[5px] leading-[14px] [&>label]:pr-1.5 [&>label]:text-right">
                  <label for="a">A:</label><input id="a" class="yel" value="1.5"><label for="d">D:</label><input id="d" class="yel" value="1.85">
                  <label for="b">B:</label><input id="b" class="yel" value="2.0"><label for="e">E:</label><input id="e" class="yel" value="8.0">
                  <label for="c">C:</label><input id="c" class="yel" value="0.1"><label for="f" class="text-[#999]">F:</label><input id="f" class="h-5 w-[68px] border border-[#999] pl-0.5" value="0.0">
                </div>
              </fieldset>
            </div>
          </div>
        </div>
        <div class="flex flex-1 flex-col [&>.btn]:w-[93px]"><button class="btn">Save To Library...</button><button class="btn mt-1.5">Draw Tool...</button><button class="btn mt-[7px]">Setup Tool...</button></div>
      </div>
      <div class="mt-[11px] flex justify-end gap-[7px] [&>button]:flex [&>button]:h-[27px] [&>button]:w-[52px] [&>button]:items-center [&>button]:justify-center [&_svg]:size-5">
        <button class="btn" aria-label="OK"><svg><use href="#ok"/></svg></button><button class="btn" aria-label="Cancel"><svg><use href="#no"/></svg></button><button class="btn" aria-label="Help"><svg><use href="#q"/></svg></button>
      </div>
    </div>
  </section>

  <!-- Pointer with highlight -->
  <svg class="pointer-events-none absolute top-[172px] left-[412px] size-10" viewBox="0 0 40 40" aria-hidden="true"><circle cx="20" cy="20" r="20" fill="#e6ea28" opacity=".65"/><path d="M21 16v16l4-3 3 6 3-1-3-6h5z" fill="#fff" stroke="#222"/></svg>
</div>
</body>
</html>
